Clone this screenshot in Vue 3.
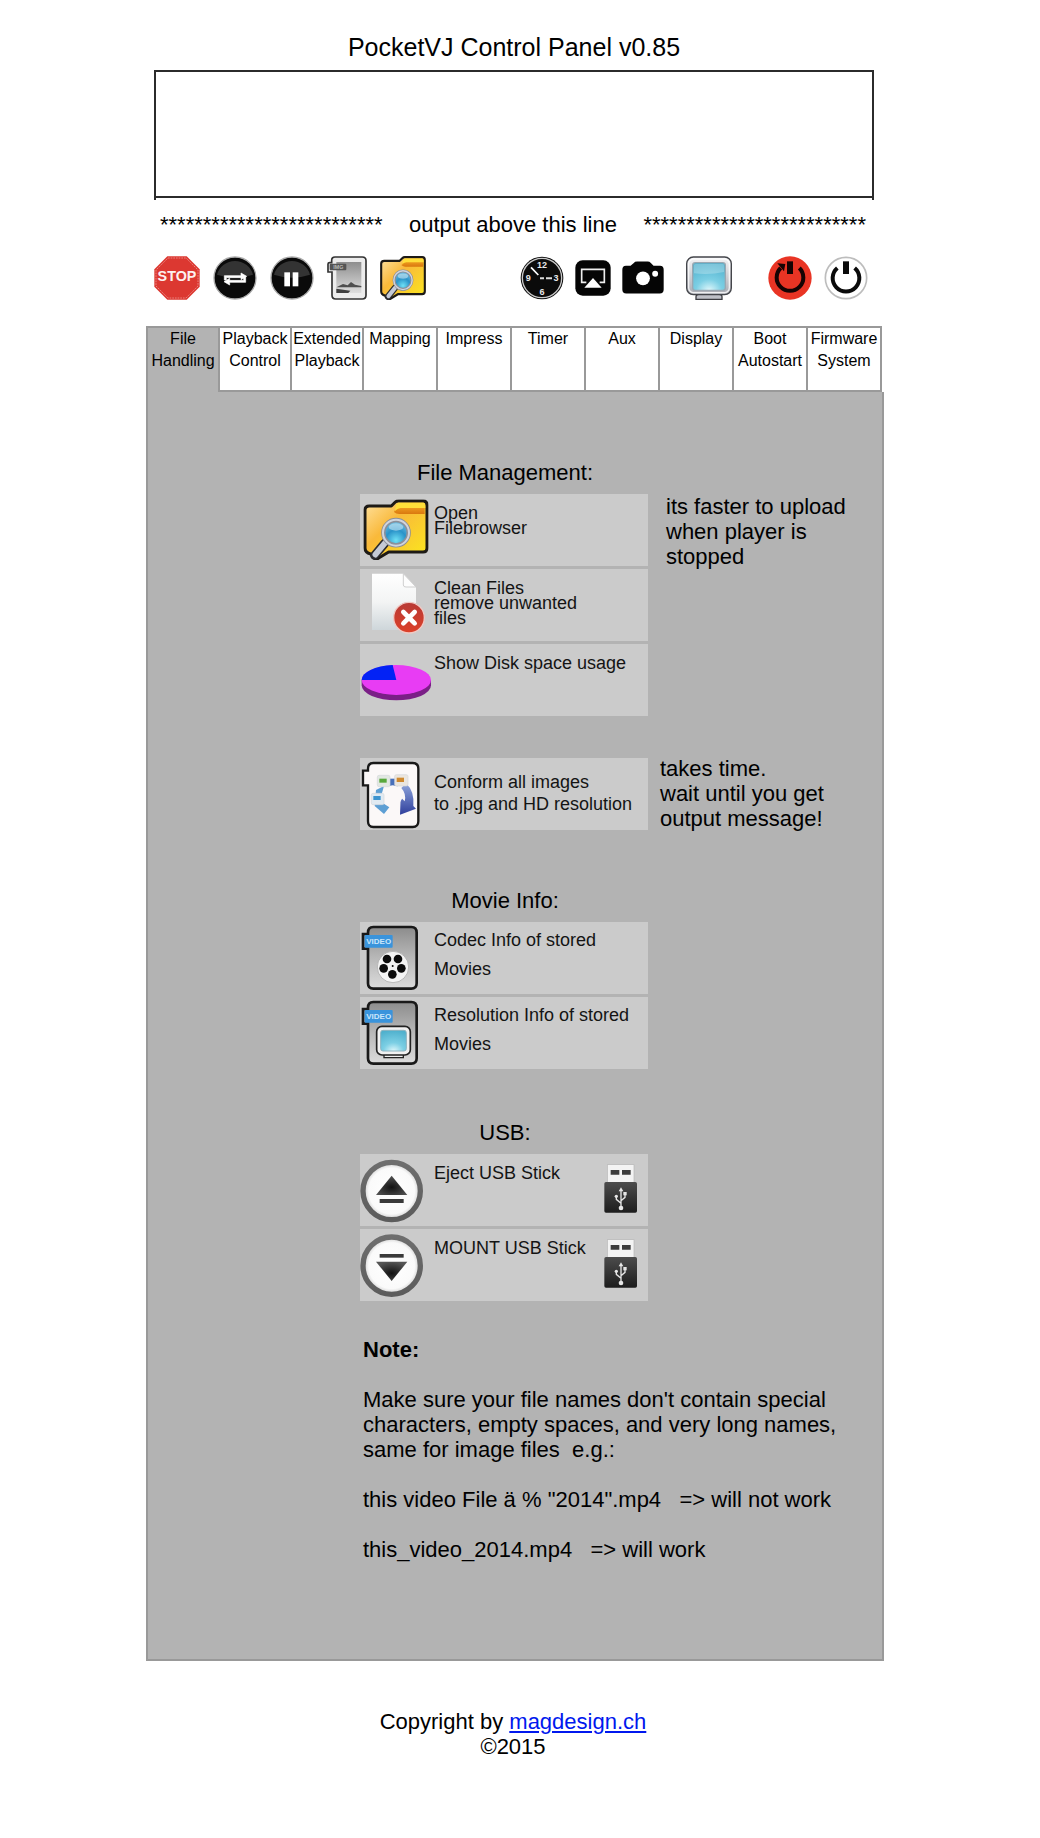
<script setup>
import { ref } from 'vue'

const stars = '*'.repeat(26)

// Lettering drawn on top of an icon, in the icon's own units (three per pixel).
const stopMarks = [{ t: 'STOP', x: 69, y: 75, size: 43, fill: '#fdf0ef' }]
const imageMarks = [{ t: 'IMG', x: 34, y: 39, size: 16, fill: '#bbbbbb' }]
const clockMarks = [
  { t: '12', x: 66, y: 35, size: 27, fill: '#e8e8e8' },
  { t: '3', x: 108, y: 76, size: 27, fill: '#e8e8e8' },
  { t: '6', x: 66, y: 116, size: 27, fill: '#e8e8e8' },
  { t: '9', x: 25, y: 76, size: 27, fill: '#e8e8e8' },
]
const videoMarks = [{ t: 'VIDEO', x: 56, y: 67, size: 24, fill: '#c9e6fa' }]

const toolGroups = [
  {
    name: 'playback',
    tools: [
      { id: 'stop', label: 'Stop', w: 46, h: 44, marks: stopMarks },
      { id: 'loop', label: 'Loop', w: 44, h: 44 },
      { id: 'pause', label: 'Pause', w: 44, h: 44 },
      { id: 'image', label: 'Image', w: 40, h: 44, marks: imageMarks },
      { id: 'folder', label: 'Filebrowser', w: 46, h: 44 },
    ],
  },
  {
    name: 'capture',
    tools: [
      { id: 'clock', label: 'Timer', w: 44, h: 44, marks: clockMarks },
      { id: 'airplay', label: 'Airplay', w: 36, h: 36 },
      { id: 'camera', label: 'Screenshot', w: 42, h: 34 },
    ],
  },
  { name: 'display', tools: [{ id: 'monitor', label: 'Display', w: 46, h: 44 }] },
  {
    name: 'power',
    tools: [
      { id: 'reboot', label: 'Reboot', w: 44, h: 44 },
      { id: 'power', label: 'Shut down', w: 44, h: 44 },
    ],
  },
]

const tabs = [
  ['File', 'Handling'],
  ['Playback', 'Control'],
  ['Extended', 'Playback'],
  ['Mapping'],
  ['Impress'],
  ['Timer'],
  ['Aux'],
  ['Display'],
  ['Boot', 'Autostart'],
  ['Firmware', 'System'],
]
const active = ref(0)

const fileActions = [
  { id: 'c-folder', lines: ['Open', 'Filebrowser'] },
  { id: 'c-clean', lines: ['Clean Files', 'remove unwanted', 'files'] },
  { id: 'c-disk', lines: ['Show Disk space usage'] },
]
const movieActions = [
  { id: 'c-codec', lines: ['Codec Info of stored', 'Movies'] },
  { id: 'c-resolution', lines: ['Resolution Info of stored', 'Movies'] },
]
const usbActions = [
  { id: 'c-eject', lines: ['Eject USB Stick'] },
  { id: 'c-mount', lines: ['MOUNT USB Stick'] },
]
</script>

<template>
  <svg class="sprite" aria-hidden="true">
    <defs>
      <linearGradient id="g-folder" x1="0" y1="0" x2="1" y2="1">
        <stop offset="0" stop-color="#ffe2a0" />
        <stop offset=".4" stop-color="#f9b93a" />
        <stop offset="1" stop-color="#fbe91c" />
      </linearGradient>
      <linearGradient id="g-fold" x1="0" y1="0" x2="0" y2="1">
        <stop offset="0" stop-color="#f5a623" />
        <stop offset="1" stop-color="#d9780f" />
      </linearGradient>
      <radialGradient id="g-lens" cx=".5" cy=".8" r=".8">
        <stop offset="0" stop-color="#6fe0f5" />
        <stop offset=".5" stop-color="#2a93c9" />
        <stop offset="1" stop-color="#7cc4e4" />
      </radialGradient>
      <radialGradient id="g-screen" cx=".5" cy="1" r="1">
        <stop offset="0" stop-color="#dff7fb" />
        <stop offset=".4" stop-color="#7ccfe4" />
        <stop offset="1" stop-color="#4fb0cd" />
      </radialGradient>
      <linearGradient id="g-case" x1="0" y1="0" x2="0" y2="1">
        <stop offset="0" stop-color="#f4f4f6" />
        <stop offset="1" stop-color="#a9abb3" />
      </linearGradient>
      <linearGradient id="g-video" x1="0" y1="0" x2="0" y2="1">
        <stop offset="0" stop-color="#8c8c8c" />
        <stop offset=".5" stop-color="#b8b8b8" />
        <stop offset="1" stop-color="#dcdcdc" />
      </linearGradient>
      <linearGradient id="g-paper" x1="0" y1="0" x2="0" y2="1">
        <stop offset="0" stop-color="#ffffff" />
        <stop offset=".5" stop-color="#f3f4f4" />
        <stop offset="1" stop-color="#ced6da" />
      </linearGradient>
      <linearGradient id="g-photo" x1="0" y1="0" x2="0" y2="1">
        <stop offset="0" stop-color="#8e8e8e" />
        <stop offset="1" stop-color="#dedede" />
      </linearGradient>
      <linearGradient id="g-red" x1="0" y1="0" x2="0" y2="1">
        <stop offset="0" stop-color="#b83a35" />
        <stop offset="1" stop-color="#dd4029" />
      </linearGradient>
      <radialGradient id="g-disc" cx=".5" cy=".5" r=".5">
        <stop offset="0" stop-color="#ffffff" />
        <stop offset=".8" stop-color="#fafafa" />
        <stop offset="1" stop-color="#c9c9c9" />
      </radialGradient>
      <linearGradient id="g-ring" x1="0" y1="0" x2="0" y2="1">
        <stop offset="0" stop-color="#6e6e6e" />
        <stop offset="1" stop-color="#5c5c5c" />
      </linearGradient>
      <radialGradient id="g-arrow" cx=".5" cy=".6" r=".6">
        <stop offset="0" stop-color="#111111" />
        <stop offset="1" stop-color="#555555" />
      </radialGradient>
      <linearGradient id="g-arc" x1="0" y1="0" x2="0" y2="1">
        <stop offset="0" stop-color="#8fa6dc" />
        <stop offset="1" stop-color="#2f3f9c" />
      </linearGradient>
      <linearGradient id="g-stick" x1="0" y1="0" x2="0" y2="1">
        <stop offset="0" stop-color="#4c4c4c" />
        <stop offset="1" stop-color="#1d1d1d" />
      </linearGradient>
    </defs>

    <symbol id="folder" viewBox="0 0 196 182" preserveAspectRatio="none">
      <path d="M5 32Q5 20 18 20H84L96 8Q99 5 106 5H180Q191 5 191 17V146Q191 158 179 158H76L46 176Q38 182 29 174L22 164Q5 160 5 146Z" fill="url(#g-folder)" stroke="#1d1a16" stroke-width="9" stroke-linejoin="round" />
      <path d="M92 38Q98 22 112 18H184V44H108Q98 44 92 38Z" fill="url(#g-fold)" />
      <path d="M98 18L104 10H180Q186 10 186 26H112Q100 28 94 36Z" fill="#ffdf3a" />
      <path d="M64 132L34 168" stroke="#2c2c30" stroke-width="27" stroke-linecap="round" />
      <path d="M64 132L36 166" stroke="#c5cad6" stroke-width="17" stroke-linecap="round" />
      <circle cx="98" cy="100" r="38" fill="url(#g-lens)" stroke="#8c8f99" stroke-width="13" />
      <circle cx="98" cy="100" r="39" fill="none" stroke="#d0d4dd" stroke-width="6" />
      <ellipse cx="98" cy="83" rx="22" ry="11" fill="#d6edf8" opacity=".55" />
    </symbol>

    <symbol id="monitor" viewBox="0 0 138 132">
      <path d="M30 122Q30 114 44 114H94Q108 114 108 122V130H30Z" fill="#bfc1c8" stroke="#3c3d42" stroke-width="4" />
      <rect x="2" y="3" width="134" height="113" rx="20" fill="url(#g-case)" stroke="#44464b" stroke-width="4" />
      <rect x="8" y="9" width="122" height="101" rx="15" fill="none" stroke="#ffffff" stroke-width="4" opacity=".8" />
      <rect x="20" y="20" width="98" height="83" rx="8" fill="url(#g-screen)" stroke="#9ba8b2" stroke-width="4" />
      <path d="M24 26Q24 24 30 24H110Q114 24 114 28V48Q70 58 24 52Z" fill="#fff" opacity=".25" />
    </symbol>

    <symbol id="stop" viewBox="0 0 138 132">
      <path d="M40 1H98L137 40V92L98 131H40L1 92V40Z" fill="#dc3831" />
      <path d="M42 6H96L132 42V90L96 126H42L6 90V42Z" fill="none" stroke="#f3aaa6" stroke-width="2" stroke-dasharray="5 3" />
    </symbol>

    <symbol id="loop" viewBox="0 0 132 132">
      <circle cx="66" cy="66" r="63" fill="#0a0a0a" stroke="#a9a9a9" stroke-width="4" />
      <path d="M12 56A56 56 0 0 1 120 56Q66 74 12 56Z" fill="#454545" opacity=".7" />
      <path d="M34 72V59H84V51L101 61L84 71V65H40V72ZM98 62V79H50V87L33 77L50 67V73H92V62Z" fill="#fff" stroke="#fff" stroke-width="2" />
    </symbol>

    <symbol id="pause" viewBox="0 0 132 132">
      <circle cx="66" cy="66" r="63" fill="#0a0a0a" stroke="#a9a9a9" stroke-width="4" />
      <path d="M12 56A56 56 0 0 1 120 56Q66 74 12 56Z" fill="#454545" opacity=".7" />
      <rect x="43" y="49" width="17" height="42" fill="#fff" />
      <rect x="68" y="49" width="17" height="42" fill="#fff" />
    </symbol>

    <symbol id="image" viewBox="0 0 120 132">
      <path d="M24 3H106Q117 3 117 14V118Q117 129 106 129H26Q15 129 15 118V48H3V24Q3 20 8 20H14V13Q14 3 24 3Z" fill="#ececec" stroke="#333" stroke-width="5" />
      <rect x="28" y="18" width="75" height="93" fill="url(#g-photo)" />
      <path d="M28 94L48 84L62 88L72 78L84 86L103 90V94Z" fill="#4e4e4e" />
      <path d="M28 98L70 104L64 111H28Z" fill="#3f3f3f" />
      <rect x="8" y="23" width="50" height="20" rx="3" fill="#555" />
    </symbol>

    <symbol id="clock" viewBox="0 0 132 132">
      <circle cx="66" cy="66" r="64" fill="#0b0b0b" />
      <circle cx="66" cy="66" r="59" fill="none" stroke="#c8c8c8" stroke-width="4" />
      <path d="M33 34L55 57" stroke="#fff" stroke-width="5" />
      <path d="M60 67H72M78 67H96" stroke="#ddd" stroke-width="6" />
    </symbol>

    <symbol id="airplay" viewBox="0 0 108 108">
      <rect x="1" y="1" width="106" height="106" rx="22" fill="#050505" />
      <path d="M34 67H20V28H88V67H74" fill="none" stroke="#eee" stroke-width="5" />
      <path d="M54 54L80 83H28Z" fill="#fff" />
    </symbol>

    <symbol id="camera" viewBox="0 0 128 102">
      <path d="M12 14H26L36 5Q39 1 46 1H78Q84 1 88 5L96 14H116Q127 14 127 26V86Q127 98 115 98H13Q1 98 1 86V26Q1 14 12 14Z" fill="#050505" />
      <circle cx="64" cy="52" r="21" fill="#fff" />
      <circle cx="101" cy="38" r="9" fill="#fff" />
    </symbol>

    <symbol id="reboot" viewBox="0 0 132 132">
      <circle cx="66" cy="66" r="65" fill="#e93424" />
      <path d="M38 36A40 40 0 1 0 94 36" fill="none" stroke="#160303" stroke-width="12" />
      <path d="M28 22L52 24L48 46Z" fill="#160303" />
      <rect x="57" y="16" width="18" height="38" fill="#160303" />
    </symbol>

    <symbol id="power" viewBox="0 0 132 132">
      <circle cx="66" cy="66" r="62" fill="#fff" stroke="#bdbdbd" stroke-width="5" />
      <path d="M40 36A40 40 0 1 0 92 36" fill="none" stroke="#0a0a0a" stroke-width="12" />
      <rect x="57" y="16" width="18" height="38" fill="#0a0a0a" />
    </symbol>

    <symbol id="c-folder" viewBox="0 0 216 216">
      <use href="#folder" x="10" y="16" width="196" height="182" />
    </symbol>

    <symbol id="c-clean" viewBox="0 0 216 216">
      <path d="M36 14H130L168 54V183H36Z" fill="url(#g-paper)" />
      <path d="M130 14V48Q130 54 138 54H168Z" fill="#fdfdfd" stroke="#cfcfcf" stroke-width="3" />
      <circle cx="147" cy="146" r="46" fill="url(#g-red)" stroke="#f1c9c4" stroke-width="4" />
      <path d="M130 129L164 163M164 129L130 163" stroke="#fff" stroke-width="14" stroke-linecap="round" />
    </symbol>

    <symbol id="c-disk" viewBox="0 0 216 216">
      <path d="M5 108V124A104 45 0 0 0 213 124V108Z" fill="#7a1f86" />
      <ellipse cx="109" cy="108" rx="104" ry="45" fill="#e83cf4" />
      <path d="M109 108H5A104 45 0 0 1 98 63Z" fill="#0322f5" />
    </symbol>

    <symbol id="c-conform" viewBox="0 0 216 216">
      <path d="M40 15H158Q175 15 175 32V190Q175 207 158 207H40Q24 207 24 190V82H9V38H24V32Q24 15 40 15Z" fill="#fbf8f8" stroke="#191919" stroke-width="7" />
      <path d="M138 76Q164 100 160 144L168 152L120 170L122 118L134 130Q140 108 124 90Z" fill="url(#g-arc)" />
      <path d="M88 62H112V86H88Z" fill="#4870ba" />
      <path d="M48 96L72 84L64 112L60 130L88 148L72 168L44 144Z" fill="#5d9fd4" />
      <circle cx="98" cy="112" r="30" fill="#fbf8f8" />
      <g stroke="#d5d8dd" stroke-width="2">
        <rect x="52" y="52" width="38" height="34" rx="5" fill="#e2e8e2" />
        <rect x="104" y="50" width="40" height="34" rx="5" fill="#ebe6df" />
        <rect x="34" y="106" width="38" height="34" rx="5" fill="#e0eaf2" />
      </g>
      <path d="M58 62H80V74H58Z" fill="#58a83c" />
      <path d="M110 59H132V72H110Z" fill="#cf8a30" />
      <path d="M40 114H62V126H40Z" fill="#3d94cf" />
    </symbol>

    <symbol id="video-card" viewBox="0 0 216 216">
      <path d="M40 15H154Q170 15 170 32V184Q170 200 154 200H40Q24 200 24 184V80H9V36H24V32Q24 15 40 15Z" fill="url(#g-video)" stroke="#191919" stroke-width="8" />
      <rect x="14" y="39" width="84" height="38" rx="3" fill="#3a94dc" />
    </symbol>

    <symbol id="c-codec" viewBox="0 0 216 216">
      <use href="#video-card" width="216" height="216" />
      <circle cx="99" cy="135" r="47" fill="#f4f4f4" stroke="#a2a2a2" stroke-width="2" />
      <g fill="#0c0c0c">
        <circle cx="81" cy="111" r="13" />
        <circle cx="114" cy="111" r="13" />
        <circle cx="71" cy="139" r="13" />
        <circle cx="124" cy="139" r="13" />
        <circle cx="97" cy="157" r="13" />
        <circle cx="98" cy="132" r="3" />
      </g>
    </symbol>

    <symbol id="c-resolution" viewBox="0 0 216 216">
      <use href="#video-card" width="216" height="216" />
      <path d="M72 172H130V182H72Z" fill="#eee" stroke="#222" stroke-width="4" />
      <rect x="50" y="88" width="101" height="86" rx="16" fill="#f1f1f1" stroke="#222" stroke-width="5" />
      <rect x="62" y="100" width="77" height="62" rx="7" fill="url(#g-screen)" stroke="#8fb4c0" stroke-width="3" />
    </symbol>

    <symbol id="c-eject" viewBox="0 0 216 216">
      <circle cx="95" cy="111" r="86" fill="url(#g-disc)" stroke="url(#g-ring)" stroke-width="16" />
      <path d="M95 65L142 123H48Z" fill="url(#g-arrow)" />
      <rect x="59" y="135" width="72" height="12" fill="#3a3a3a" />
    </symbol>

    <symbol id="c-mount" viewBox="0 0 216 216">
      <circle cx="95" cy="110" r="86" fill="url(#g-disc)" stroke="url(#g-ring)" stroke-width="16" />
      <path d="M95 156L142 98H48Z" fill="url(#g-arrow)" />
      <rect x="59" y="75" width="72" height="11" fill="#3a3a3a" />
    </symbol>

    <symbol id="stick" viewBox="0 0 102 150">
      <rect x="10" y="2" width="80" height="60" fill="#f3f3f3" stroke="#b5b5b5" stroke-width="2" />
      <path d="M20 18H46V32H20ZM54 18H80V32H54Z" fill="#3b3b3b" />
      <rect x="1" y="54" width="98" height="92" rx="5" fill="url(#g-stick)" />
      <g fill="none" stroke="#e6e6e6" stroke-width="4">
        <path d="M51 132V78M51 118L37 106V98M51 110L63 100V90" />
      </g>
      <g fill="#e6e6e6">
        <path d="M51 70L58 82H44Z" />
        <circle cx="51" cy="132" r="7" />
        <circle cx="37" cy="97" r="5" />
        <rect x="58" y="84" width="10" height="10" />
      </g>
    </symbol>
  </svg>

  <div class="page">
    <div class="wrap">
      <header class="head">
        <h1>PocketVJ Control Panel v0.85</h1>
        <div class="output"><div class="screen"></div></div>
        <div class="outline">
          <span>{{ stars }}</span>
          <span>output above this line</span>
          <span>{{ stars }}</span>
        </div>
        <div class="toolbar">
          <div v-for="g in toolGroups" :key="g.name" class="tools" :class="g.name">
            <button v-for="t in g.tools" :key="t.id" type="button" class="tool" :aria-label="t.label">
              <svg :width="t.w" :height="t.h" :viewBox="`0 0 ${t.w * 3} ${t.h * 3}`">
                <use :href="'#' + t.id" />
                <text v-for="m in t.marks" :key="m.t" class="mark" :x="m.x" :y="m.y" :font-size="m.size" :fill="m.fill">{{ m.t }}</text>
              </svg>
            </button>
          </div>
        </div>
      </header>

      <nav class="tabs">
        <button
          v-for="(t, i) in tabs"
          :key="i"
          type="button"
          class="tab"
          :class="{ active: i === active }"
          @click="active = i"
        >
          <span v-for="l in t" :key="l">{{ l }}</span>
        </button>
      </nav>

      <main class="panel">
        <section>
          <h2>File Management:</h2>
          <div class="row">
            <div class="cards">
              <button v-for="a in fileActions" :key="a.id" type="button" class="card tight">
                <svg class="pic"><use :href="'#' + a.id" /></svg>
                <span class="label"><span v-for="l in a.lines" :key="l">{{ l }}</span></span>
              </button>
            </div>
            <p class="hint far">its faster to upload<br />when player is<br />stopped</p>
          </div>
        </section>

        <section class="conform">
          <div class="row centered">
            <div class="cards">
              <button type="button" class="card medium">
                <svg class="pic"><use href="#c-conform" /></svg>
                <span class="label"><span>Conform all images</span><span>to .jpg and HD resolution</span></span>
              </button>
            </div>
            <p class="hint">takes time.<br />wait until you get<br />output message!</p>
          </div>
        </section>

        <section class="movie">
          <h2>Movie Info:</h2>
          <div class="cards">
            <button v-for="a in movieActions" :key="a.id" type="button" class="card loose">
              <svg class="pic" viewBox="0 0 216 216">
                <use :href="'#' + a.id" />
                <text v-for="m in videoMarks" :key="m.t" class="mark" :x="m.x" :y="m.y" :font-size="m.size" :fill="m.fill">{{ m.t }}</text>
              </svg>
              <span class="label"><span v-for="l in a.lines" :key="l">{{ l }}</span></span>
            </button>
          </div>
        </section>

        <section class="usb">
          <h2>USB:</h2>
          <div class="cards">
            <button v-for="a in usbActions" :key="a.id" type="button" class="card tight">
              <svg class="pic"><use :href="'#' + a.id" /></svg>
              <span class="label"><span v-for="l in a.lines" :key="l">{{ l }}</span></span>
              <svg class="stick"><use href="#stick" /></svg>
            </button>
          </div>
        </section>

        <section class="note">
          <h3>Note:</h3>
          <p>Make sure your file names don't contain special<br />characters, empty spaces, and very long names,<br />same for image files&nbsp; e.g.:</p>
          <p>this video File ä % "2014".mp4&nbsp;&nbsp; =&gt; will not work</p>
          <p>this_video_2014.mp4&nbsp;&nbsp; =&gt; will work</p>
        </section>
      </main>

      <footer class="foot">
        <p>Copyright by <a href="http://magdesign.ch">magdesign.ch</a></p>
        <p>©2015</p>
      </footer>
    </div>
  </div>
</template>

<style>
body {
  background: #fff;
}
</style>

<style scoped>
.sprite {
  position: absolute;
  width: 0;
  height: 0;
}
.page {
  box-sizing: border-box;
  padding: 32px 10px 78px 0;
  font-family: "Liberation Sans", Arial, sans-serif;
  font-size: 22px;
  line-height: 25px;
  color: #000;
}
.wrap {
  max-width: 738px;
  margin: 0 auto;
}
h1,
h2,
h3,
p {
  margin: 0;
}
button {
  box-sizing: border-box;
  margin: 0;
  padding: 0;
  border: 0;
  background: none;
  font: inherit;
  color: inherit;
  cursor: pointer;
}
svg {
  display: block;
  flex: none;
}
.mark {
  font-weight: bold;
  text-anchor: middle;
}
.head {
  padding: 0 10px 26px 8px;
}
h1 {
  font-size: 25px;
  line-height: 30px;
  font-weight: normal;
  text-align: center;
}
.output {
  margin-top: 8px;
  padding-bottom: 2px;
  border: 2px solid #2b2b2b;
  border-bottom: 0;
}
.screen {
  height: 124px;
  border-bottom: 2px solid #2b2b2b;
}
.outline {
  display: flex;
  justify-content: space-between;
  margin-top: 12px;
  padding: 0 8px 0 6px;
}
.toolbar {
  display: flex;
  align-items: center;
  margin-top: 19px;
}
.tools {
  display: flex;
  align-items: center;
  gap: 13px;
}
.capture {
  gap: 11px;
  margin-left: 94px;
}
.display {
  margin-left: 22px;
}
.power {
  gap: 12px;
  margin-left: 36px;
}
.tabs {
  display: grid;
  grid-template-columns: repeat(3, 72fr) repeat(6, 74fr) 76fr;
  margin-right: 2px;
}
.tab {
  display: flex;
  flex-direction: column;
  align-items: center;
  min-width: 0;
  height: 66px;
  border: solid #999;
  border-width: 2px 0 2px 2px;
  background: #fff;
  font-size: 16px;
  line-height: 22px;
}
.tab:last-child {
  border-right-width: 2px;
}
.tab.active {
  border-bottom-width: 0;
  background: #b3b3b3;
}
.panel {
  padding: 68px 0 97px 212px;
  border: 2px solid #999;
  border-top: 0;
  background: #b3b3b3;
}
h2 {
  width: 290px;
  margin-bottom: 9px;
  font-size: 22px;
  font-weight: normal;
  text-align: center;
}
.row {
  display: flex;
  align-items: flex-start;
}
.row.centered {
  align-items: center;
}
.cards {
  display: flex;
  flex-direction: column;
  gap: 3px;
  width: 288px;
  flex: none;
}
.card {
  display: flex;
  align-items: flex-start;
  height: 72px;
  background: #cbcbcb;
  font-size: 18px;
  text-align: left;
  color: #141414;
}
.pic {
  width: 72px;
  height: 72px;
}
.label {
  display: flex;
  flex-direction: column;
  flex: 1;
  padding-left: 2px;
  white-space: nowrap;
}
.tight .label {
  padding-top: 12px;
  line-height: 15px;
}
.medium .label {
  padding-top: 13px;
  line-height: 22px;
}
.loose .label {
  padding-top: 4px;
  line-height: 29px;
}
.stick {
  width: 34px;
  height: 50px;
  margin: 10px 10px 0 0;
}
.hint {
  padding-left: 12px;
}
.hint.far {
  padding-left: 18px;
}
.conform {
  margin-top: 40px;
}
.movie {
  margin-top: 57px;
}
.usb {
  margin-top: 51px;
}
.note {
  display: flex;
  flex-direction: column;
  gap: 25px;
  margin-top: 36px;
  padding-left: 3px;
}
h3 {
  font-size: 22px;
  font-weight: bold;
}
.foot {
  margin-top: 48px;
  padding-right: 4px;
  text-align: center;
}
.foot a {
  color: #0018ee;
}
</style>
